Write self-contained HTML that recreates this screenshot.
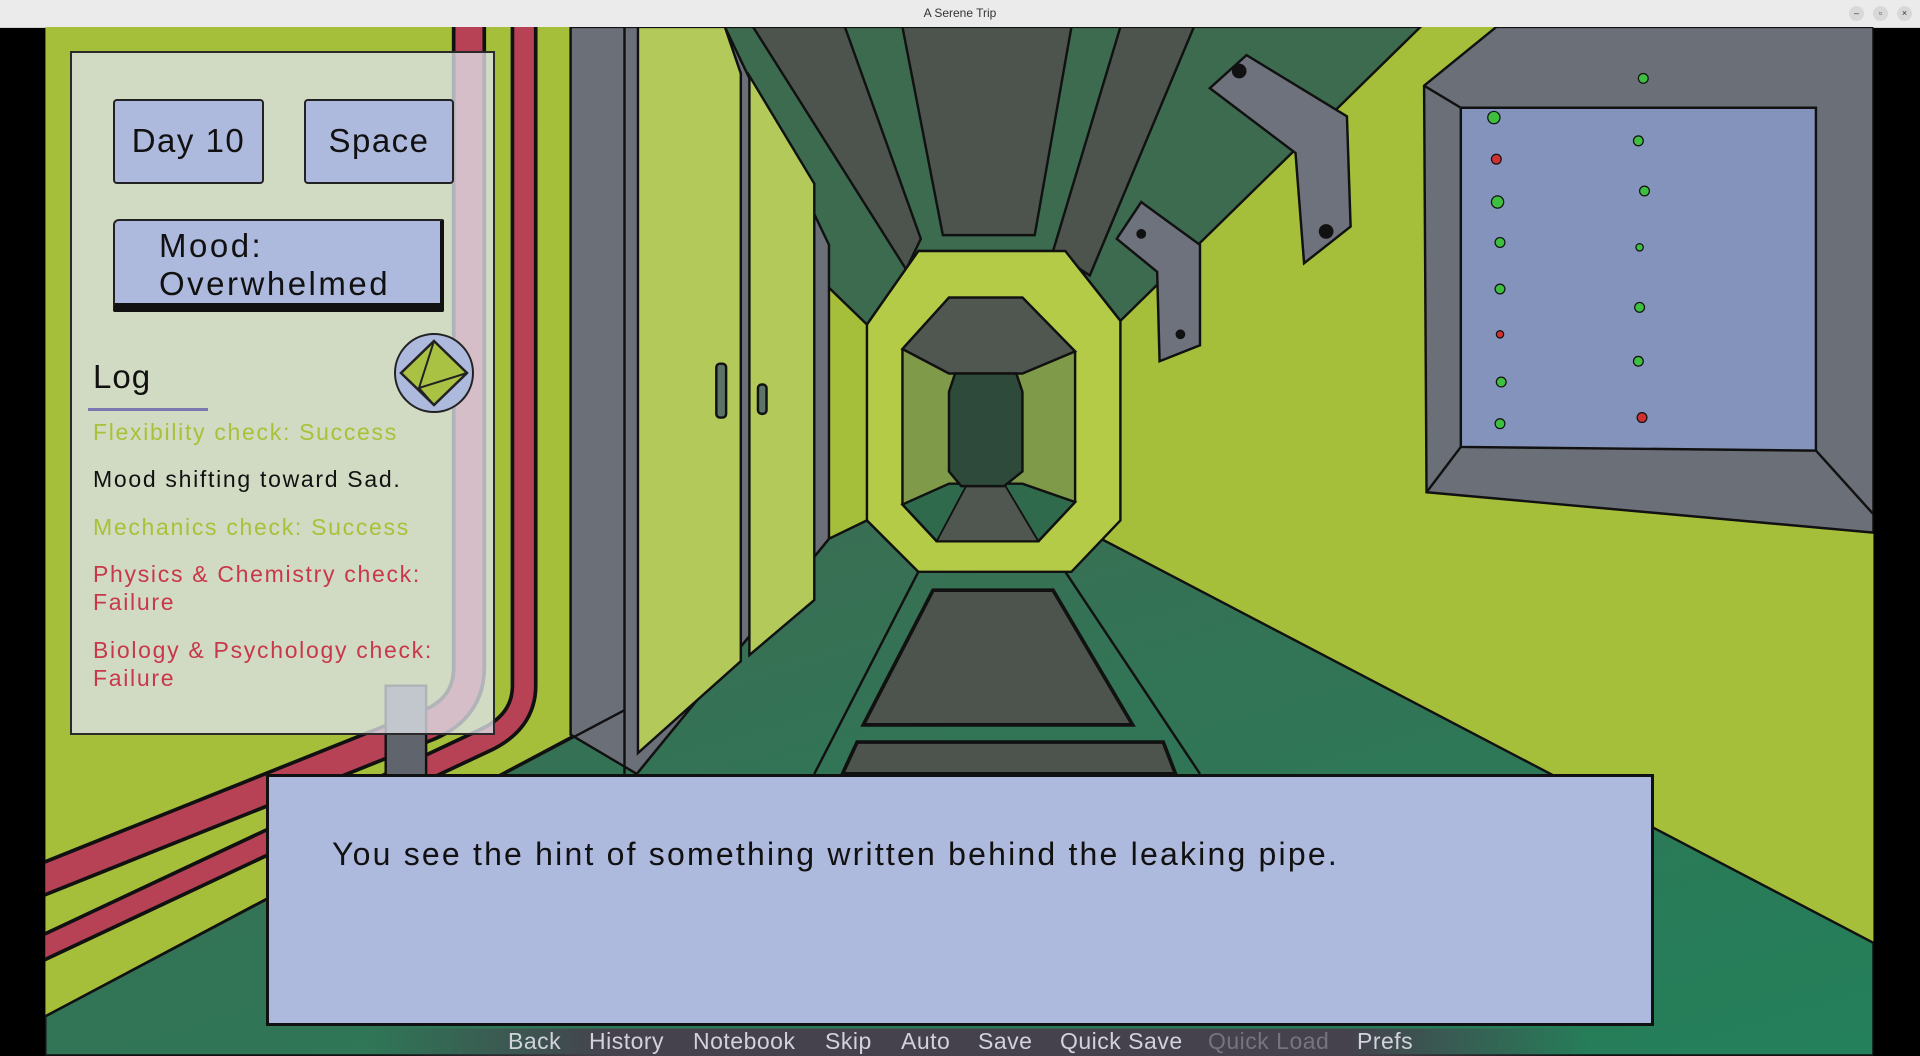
<!DOCTYPE html>
<html><head><meta charset="utf-8">
<style>
html,body{margin:0;padding:0;width:1920px;height:1056px;overflow:hidden;background:#000;font-family:"Liberation Sans",sans-serif;}
#bar{position:absolute;left:0;top:0;width:1920px;height:27px;background:#ebebeb;border-bottom:1px solid #d0d0d0;text-align:center;font-size:12px;line-height:27px;color:#333;}
.wb{position:absolute;top:6px;width:15px;height:15px;border-radius:50%;background:#d8d8d8;font-size:9px;line-height:15px;text-align:center;color:#333}
svg{position:absolute;left:0;top:0}
.abs{position:absolute}
#panel{left:70px;top:51px;width:425px;height:684px;background:rgba(222,226,232,0.78);border:2px solid #2a2a2a;box-sizing:border-box}
.btn{background:#aeb9de;border:2px solid #222;border-radius:4px;box-sizing:border-box;font-size:33px;color:#111;text-align:center;line-height:80px;letter-spacing:1.5px}
.log{left:93px;font-size:23px;letter-spacing:1.7px;line-height:28px}
.g{color:#a9c138}.r{color:#c8374a}.k{color:#111}
#dlg{left:266px;top:774px;width:1388px;height:252px;background:#aeb9de;border:3px solid #111;box-sizing:border-box}
.m{position:absolute;top:1028px;font-size:23px;color:#d2d2dc;letter-spacing:0.5px}
</style></head><body>
<div id="bar">A Serene Trip
<div class="wb" style="left:1849px">–</div><div class="wb" style="left:1873px">▫</div><div class="wb" style="left:1897px">×</div></div>

<svg width="1920" height="1056" viewBox="0 0 1568 862.4">
<defs>
<linearGradient id="fl" x1="0" y1="0" x2="1" y2="1"><stop offset="0" stop-color="#3f6a52"/><stop offset="1" stop-color="#23805a"/></linearGradient>
<linearGradient id="mb" x1="0" y1="0" x2="1" y2="0"><stop offset="0" stop-color="#45424d" stop-opacity="0"/><stop offset="0.2" stop-color="#45424d"/><stop offset="0.8" stop-color="#45424d"/><stop offset="1" stop-color="#45424d" stop-opacity="0"/></linearGradient>
<clipPath id="ga"><rect x="37" y="22" width="1493" height="841"/></clipPath>
</defs>
<g clip-path="url(#ga)">
<rect x="37" y="22" width="1493" height="841" fill="#a6bf3b"/>
<polygon points="37,830 470,600 520,632 677,440 708,425 750,467 870,467 880,430 1530,770 1530,862 37,862" fill="url(#fl)" stroke="#111" stroke-width="2"/>
<polygon points="590,22 1160,22 1060,120 915,262 870,205 750,205 708,265 677,235" fill="#3d6b50" stroke="#111" stroke-width="2"/>
<polygon points="615,22 690,22 752,195 740,220" fill="#4d544e" stroke="#111" stroke-width="2"/>
<polygon points="737,22 875,22 845,192 770,192" fill="#4d544e" stroke="#111" stroke-width="2"/>
<polygon points="915,22 975,22 890,225 860,205" fill="#4d544e" stroke="#111" stroke-width="2"/>
<polygon points="750,205 870,205 915,262 915,425 875,467 750,467 708,425 708,265" fill="#b3cb47" stroke="#111" stroke-width="2"/>
<polygon points="775,243 835,243 878,287 878,410 848,442 765,442 737,412 737,285" fill="#7f9b4a" stroke="#111" stroke-width="2"/>
<polygon points="775,243 835,243 878,287 835,305 775,305 737,285" fill="#505650" stroke="#111" stroke-width="2"/>
<polygon points="775,395 835,395 878,410 848,442 765,442 737,412" fill="#2f6a4c" stroke="#111" stroke-width="2"/>
<polygon points="790,395 820,395 848,442 765,442" fill="#505650" stroke="#111" stroke-width="1.5"/>
<polygon points="780,305 830,305 835,320 835,385 820,397 785,397 775,385 775,320" fill="#2d4a3a" stroke="#111" stroke-width="2"/>
<polygon points="762,482 860,482 925,592 705,592" fill="#4d544e" stroke="#111" stroke-width="3"/>
<polygon points="700,606 950,606 960,632 688,632" fill="#4d544e" stroke="#111" stroke-width="3"/>
<line x1="750" y1="467" x2="665" y2="632" stroke="#111" stroke-width="2"/>
<line x1="870" y1="467" x2="980" y2="632" stroke="#111" stroke-width="2"/>
<polygon points="466,22 592,22 677,200 677,440 520,632 466,600" fill="#6b6f78" stroke="#111" stroke-width="2"/>
<polygon points="521,22 592,22 605,60 605,540 521,615" fill="#b3c95a" stroke="#111" stroke-width="2"/>
<polygon points="612,62 665,150 665,490 612,535" fill="#b3c95a" stroke="#111" stroke-width="2"/>
<rect x="585" y="297" width="8" height="44" rx="3" fill="#5b7468" stroke="#111" stroke-width="2"/>
<rect x="619" y="314" width="7" height="24" rx="3" fill="#5b7468" stroke="#111" stroke-width="2"/>
<line x1="510" y1="22" x2="510" y2="632" stroke="#111" stroke-width="2"/>
<polygon points="988,72 1018,45 1100,95 1103,185 1065,215 1058,125" fill="#6e727c" stroke="#111" stroke-width="2"/>
<circle cx="1012" cy="58" r="6" fill="#111"/><circle cx="1083" cy="189" r="6" fill="#111"/>
<polygon points="912,195 932,165 980,200 980,282 947,295 945,222" fill="#6e727c" stroke="#111" stroke-width="2"/>
<circle cx="932" cy="191" r="4" fill="#111"/><circle cx="964" cy="273" r="4" fill="#111"/>
<polygon points="1163,70 1222,22 1530,22 1530,435 1165,402" fill="#6b6f78" stroke="#111" stroke-width="2"/>
<polygon points="1193,88 1483,88 1483,368 1193,365" fill="#8393bb" stroke="#111" stroke-width="2"/>
<line x1="1163" y1="70" x2="1193" y2="88" stroke="#111" stroke-width="2"/>
<line x1="1165" y1="402" x2="1193" y2="365" stroke="#111" stroke-width="2"/>
<line x1="1483" y1="368" x2="1530" y2="420" stroke="#111" stroke-width="2"/>
<g stroke="#111" stroke-width="1">
<circle cx="1220" cy="96" r="5" fill="#3fbf3f"/><circle cx="1222" cy="130" r="4" fill="#d03030"/><circle cx="1223" cy="165" r="5" fill="#3fbf3f"/><circle cx="1225" cy="198" r="4" fill="#3fbf3f"/><circle cx="1225" cy="236" r="4" fill="#3fbf3f"/><circle cx="1225" cy="273" r="3" fill="#d03030"/><circle cx="1226" cy="312" r="4" fill="#3fbf3f"/><circle cx="1225" cy="346" r="4" fill="#3fbf3f"/>
<circle cx="1342" cy="64" r="4" fill="#3fbf3f"/><circle cx="1338" cy="115" r="4" fill="#3fbf3f"/><circle cx="1343" cy="156" r="4" fill="#3fbf3f"/><circle cx="1339" cy="202" r="3" fill="#3fbf3f"/><circle cx="1339" cy="251" r="4" fill="#3fbf3f"/><circle cx="1338" cy="295" r="4" fill="#3fbf3f"/><circle cx="1341" cy="341" r="4" fill="#d03030"/>
</g>
<path d="M383,22 V545 Q383,578 350,592 L20,724" fill="none" stroke="#111" stroke-width="28"/>
<path d="M383,22 V545 Q383,578 350,592 L20,724" fill="none" stroke="#b84255" stroke-width="22"/>
<path d="M428,22 V560 Q428,590 395,605 L20,781" fill="none" stroke="#111" stroke-width="22"/>
<path d="M428,22 V560 Q428,590 395,605 L20,781" fill="none" stroke="#b84255" stroke-width="16"/>
<rect x="315" y="560" width="33" height="75" fill="#60646c" stroke="#111" stroke-width="2"/>
<line x1="37" y1="830" x2="510" y2="580" stroke="#111" stroke-width="2"/>
<rect x="300" y="840" width="1000" height="23" fill="url(#mb)"/>
</g>
</svg>

<div id="panel" class="abs"></div>
<div class="abs btn" style="left:113px;top:99px;width:151px;height:85px">Day 10</div>
<div class="abs btn" style="left:304px;top:99px;width:150px;height:85px">Space</div>
<div class="abs btn" style="left:113px;top:219px;width:331px;height:93px;border-bottom:9px solid #111;border-right:4px solid #111;border-radius:6px 2px 2px 2px;text-align:left;padding-left:44px;line-height:38px;padding-top:6px;letter-spacing:2.5px">Mood:<br>Overwhelmed</div>
<div class="abs" style="left:93px;top:358px;font-size:33px;color:#111;letter-spacing:1px">Log</div>
<div class="abs" style="left:88px;top:408px;width:120px;height:3px;background:#7a78b0"></div>
<svg width="82" height="82" style="left:393px;top:332px" viewBox="0 0 82 82">
<circle cx="41" cy="41" r="39" fill="#aeb9de" stroke="#222" stroke-width="2"/>
<polygon points="41,9 74,41 41,73 8,41" fill="#a9c244" stroke="#222" stroke-width="2.5"/>
<polyline points="41,9 26,56 74,41" fill="none" stroke="#222" stroke-width="2"/>
<line x1="26" y1="56" x2="41" y2="73" stroke="#222" stroke-width="2"/>
</svg>
<div class="abs log g" style="top:418px">Flexibility check: Success</div>
<div class="abs log k" style="top:465px">Mood shifting toward Sad.</div>
<div class="abs log g" style="top:513px">Mechanics check: Success</div>
<div class="abs log r" style="top:560px">Physics &amp; Chemistry check:<br>Failure</div>
<div class="abs log r" style="top:636px">Biology &amp; Psychology check:<br>Failure</div>

<div id="dlg" class="abs"></div>
<div class="abs" style="left:332px;top:836px;font-size:32px;color:#111;letter-spacing:2.2px">You see the hint of something written behind the leaking pipe.</div>

<div class="m" style="left:508px">Back</div>
<div class="m" style="left:589px">History</div>
<div class="m" style="left:693px">Notebook</div>
<div class="m" style="left:825px">Skip</div>
<div class="m" style="left:901px">Auto</div>
<div class="m" style="left:978px">Save</div>
<div class="m" style="left:1060px">Quick Save</div>
<div class="m" style="left:1208px;color:#77737f">Quick Load</div>
<div class="m" style="left:1357px">Prefs</div>
</body></html>
